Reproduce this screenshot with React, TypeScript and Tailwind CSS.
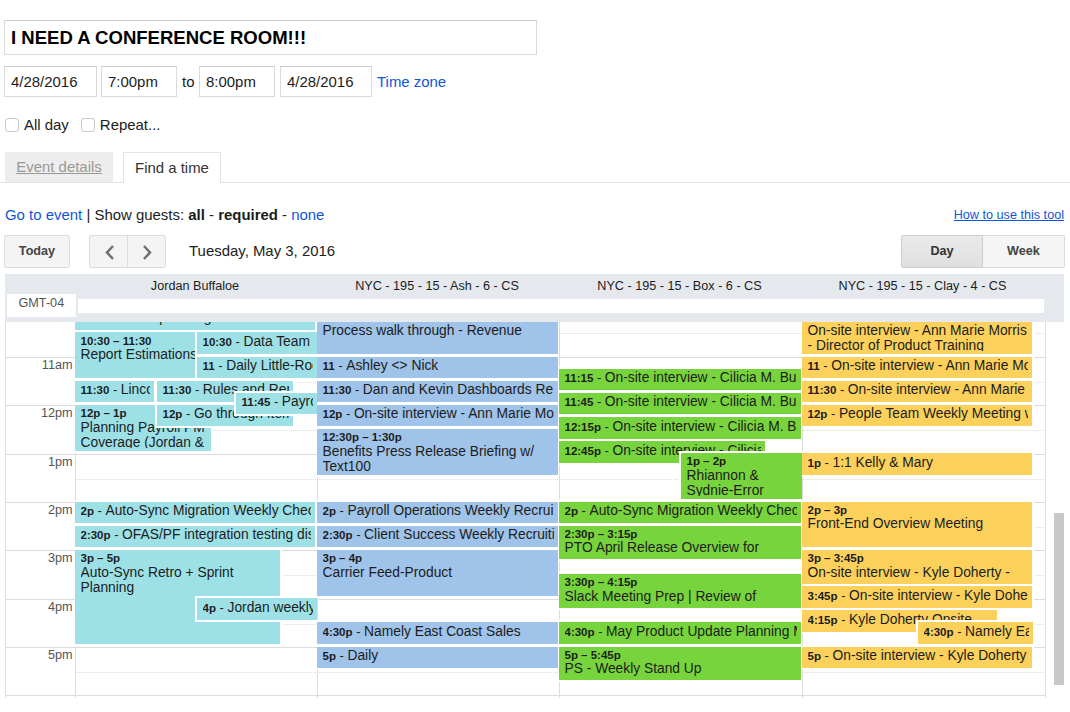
import React from "react";

const HOUR = 48.33;
const FIRST_TICK = 34.6;

type Tone = "cyan" | "blue" | "green" | "yellow";

interface CalEvent {
  start: number;
  hours: number;
  time: string;
  lines: string[];
  left?: number;
  width: number;
}

interface Column {
  name: string;
  tone: Tone;
  size: string;
  events: CalEvent[];
}

const tones: Record<Tone, string> = {
  cyan: "bg-[#9de1e7]",
  blue: "bg-[#9fc3e9]",
  green: "bg-[#78d43c]",
  yellow: "bg-[#fbd15c]",
};

const columns: Column[] = [
  {
    name: "Jordan Buffaloe",
    tone: "cyan",
    size: "w-[242px]",
    events: [
      { start: 10, hours: 0.5, time: "10", lines: ["Release planning"], width: 240 },
      { start: 10.5, hours: 1, time: "10:30 – 11:30", lines: ["Report Estimations"], width: 119.5 },
      { start: 10.5, hours: 0.5, time: "10:30", lines: ["Data Team"], left: 122, width: 120 },
      { start: 11, hours: 0.5, time: "11", lines: ["Daily Little-Ro", "ck"], left: 122, width: 120 },
      { start: 12, hours: 1, time: "12p – 1p", lines: ["Planning Payroll PM", "Coverage (Jordan &"], width: 135.5 },
      { start: 11.5, hours: 0.5, time: "11:30", lines: ["Linco"], width: 79 },
      { start: 11.5, hours: 0.5, time: "11:30", lines: ["Rules and Rem"], left: 82, width: 135.5 },
      { start: 12, hours: 0.5, time: "12p", lines: ["Go through Item"], left: 82, width: 135.5 },
      { start: 11.75, hours: 0.5, time: "11:45", lines: ["Payro"], left: 161, width: 81 },
      { start: 14, hours: 0.5, time: "2p", lines: ["Auto-Sync Migration Weekly Chec"], width: 240 },
      { start: 14.5, hours: 0.5, time: "2:30p", lines: ["OFAS/PF integration testing disc"], width: 240 },
      { start: 15, hours: 2, time: "3p – 5p", lines: ["Auto-Sync Retro + Sprint", "Planning"], width: 205 },
      { start: 16, hours: 0.5, time: "4p", lines: ["Jordan weekly"], left: 122, width: 120 },
    ],
  },
  {
    name: "NYC - 195 - 15 - Ash - 6 - CS",
    tone: "blue",
    size: "w-[242px]",
    events: [
      { start: 10, hours: 1, time: "10 – 11", lines: ["Process walk through - Revenue"], width: 240.5 },
      { start: 11, hours: 0.5, time: "11", lines: ["Ashley <> Nick"], width: 240.5 },
      { start: 11.5, hours: 0.5, time: "11:30", lines: ["Dan and Kevin Dashboards Re"], width: 240.5 },
      { start: 12, hours: 0.5, time: "12p", lines: ["On-site interview - Ann Marie Mo"], width: 240.5 },
      { start: 12.5, hours: 1, time: "12:30p – 1:30p", lines: ["Benefits Press Release Briefing w/", "Text100"], width: 240.5 },
      { start: 14, hours: 0.5, time: "2p", lines: ["Payroll Operations Weekly Recrui"], width: 240.5 },
      { start: 14.5, hours: 0.5, time: "2:30p", lines: ["Client Success Weekly Recruiti"], width: 240.5 },
      { start: 15, hours: 1, time: "3p – 4p", lines: ["Carrier Feed-Product"], width: 240.5 },
      { start: 16.5, hours: 0.5, time: "4:30p", lines: ["Namely East Coast Sales"], width: 240.5 },
      { start: 17, hours: 0.5, time: "5p", lines: ["Daily"], width: 240.5 },
    ],
  },
  {
    name: "NYC - 195 - 15 - Box - 6 - CS",
    tone: "green",
    size: "w-[243px]",
    events: [
      { start: 11.25, hours: 0.5, time: "11:15", lines: ["On-site interview - Cilicia M. Bu"], width: 241.5 },
      { start: 11.75, hours: 0.5, time: "11:45", lines: ["On-site interview - Cilicia M. Bu"], width: 241.5 },
      { start: 12.25, hours: 0.5, time: "12:15p", lines: ["On-site interview - Cilicia M. B"], width: 241.5 },
      { start: 12.75, hours: 0.5, time: "12:45p", lines: ["On-site interview - Cilicia"], width: 206 },
      { start: 13, hours: 1, time: "1p – 2p", lines: ["Rhiannon &", "Sydnie-Error"], left: 122, width: 121 },
      { start: 14, hours: 0.5, time: "2p", lines: ["Auto-Sync Migration Weekly Chec"], width: 241.5 },
      { start: 14.5, hours: 0.75, time: "2:30p – 3:15p", lines: ["PTO April Release Overview for"], width: 241.5 },
      { start: 15.5, hours: 0.75, time: "3:30p – 4:15p", lines: ["Slack Meeting Prep | Review of"], width: 241.5 },
      { start: 16.5, hours: 0.5, time: "4:30p", lines: ["May Product Update Planning M"], width: 241.5 },
      { start: 17, hours: 0.75, time: "5p – 5:45p", lines: ["PS - Weekly Stand Up"], width: 241.5 },
    ],
  },
  {
    name: "NYC - 195 - 15 - Clay - 4 - CS",
    tone: "yellow",
    size: "w-[243px]",
    events: [
      { start: 10, hours: 1, time: "10 – 11", lines: ["On-site interview - Ann Marie Morris", "- Director of Product Training"], width: 230 },
      { start: 11, hours: 0.5, time: "11", lines: ["On-site interview - Ann Marie Mo"], width: 230 },
      { start: 11.5, hours: 0.5, time: "11:30", lines: ["On-site interview - Ann Marie"], width: 230 },
      { start: 12, hours: 0.5, time: "12p", lines: ["People Team Weekly Meeting w"], width: 230 },
      { start: 13, hours: 0.5, time: "1p", lines: ["1:1 Kelly & Mary"], width: 230 },
      { start: 14, hours: 1, time: "2p – 3p", lines: ["Front-End Overview Meeting"], width: 230 },
      { start: 15, hours: 0.75, time: "3p – 3:45p", lines: ["On-site interview - Kyle Doherty -"], width: 230 },
      { start: 15.75, hours: 0.5, time: "3:45p", lines: ["On-site interview - Kyle Dohe"], width: 230 },
      { start: 16.25, hours: 0.5, time: "4:15p", lines: ["Kyle Doherty Onsite"], width: 195 },
      { start: 16.5, hours: 0.5, time: "4:30p", lines: ["Namely Ea"], left: 116, width: 115 },
      { start: 17, hours: 0.5, time: "5p", lines: ["On-site interview - Kyle Doherty"], width: 230 },
    ],
  },
];

const hours = ["11am", "12pm", "1pm", "2pm", "3pm", "4pm", "5pm"];

function EventBlock({ event, tone }: { event: CalEvent; tone: Tone }) {
  const compact = event.hours <= 0.5;
  return (
    <div
      className={`absolute pl-[5.5px] pb-[3px] ring-2 ring-white ${compact ? "pr-[4px]" : "pr-0"} ${tones[tone]}`}
      style={{
        top: FIRST_TICK + (event.start - 11) * HOUR,
        height: event.hours * HOUR - 2.6,
        left: event.left ?? 0,
        width: event.width,
      }}
    >
      {compact ? (
        <div className="h-full overflow-hidden whitespace-nowrap pt-[0.5px] text-[13.8px] leading-[17px]">
          <b className="text-[11.5px]">{event.time}</b>
          <span className="text-[13px]">{" - "}</span>
          {event.lines.join("")}
        </div>
      ) : (
        <div className="h-full overflow-hidden whitespace-nowrap pt-[2.2px]">
          <div className="text-[11.5px] font-bold leading-[12.5px]">{event.time}</div>
          {event.lines.map((line) => (
            <div key={line} className="text-[13.8px] leading-[15px]">
              {line}
            </div>
          ))}
        </div>
      )}
    </div>
  );
}

function Field({ value, className }: { value: string; className: string }) {
  return (
    <div className={`flex h-[31px] items-center border border-[#dadada] border-t-[#c8c8c8] pl-[6px] pt-[2px] ${className}`}>
      {value}
    </div>
  );
}

function Check({ label }: { label: string }) {
  return (
    <label className="flex items-center gap-[5px]">
      <span className="size-[14px] rounded-[3px] border border-[#c9c9c9] bg-white" />
      {label}
    </label>
  );
}

function Chevron({ d }: { d: string }) {
  return (
    <svg width="12" height="16" viewBox="0 0 12 16" fill="none" stroke="#707070" strokeWidth="2.5">
      <path d={d} />
    </svg>
  );
}

export default function App() {
  return (
    <div className="h-[712px] w-[1070px] overflow-hidden bg-white font-['Liberation_Sans',Arial,sans-serif] text-[14.95px] text-[#1c1c1c]">
      <div className="pl-[4px] pt-[20px]">
        <div className="flex h-[35px] w-[533px] items-center border border-[#dadada] border-t-[#c8c8c8] pl-[6px] text-[18.55px] font-bold text-black">
          I NEED A CONFERENCE ROOM!!!
        </div>
        <div className="mt-[11px] flex items-center">
          <Field value="4/28/2016" className="w-[93px]" />
          <Field value="7:00pm" className="ml-[4px] w-[76px]" />
          <span className="w-[22px] pl-[5px] pt-[2px]">to</span>
          <Field value="8:00pm" className="w-[76px]" />
          <Field value="4/28/2016" className="ml-[5px] w-[92px]" />
          <a className="ml-[5px] pt-[2px] text-[#1155dd]">Time zone</a>
        </div>
        <div className="mt-[17px] flex h-[22px] items-center gap-[12px] pl-px">
          <Check label="All day" />
          <Check label="Repeat..." />
        </div>
      </div>

      <div className="mt-[16px] flex h-[31px] items-stretch border-b border-[#e4e4e4] pl-[5px]">
        <div className="flex w-[108px] items-center justify-center bg-[#ededed] text-[#999] underline">Event details</div>
        <div className="-mb-px ml-[10px] flex w-[98px] items-center justify-center border border-b-0 border-[#e4e4e4] bg-white text-[#333]">
          Find a time
        </div>
      </div>

      <div className="mt-[21px] flex h-[22px] items-center justify-between pl-[5px] pr-[6px]">
        <div>
          <a className="text-[#1155dd]">Go to event</a> | Show guests: <b>all</b> - <b>required</b> -{" "}
          <a className="text-[#1155dd]">none</a>
        </div>
        <a className="text-[12.65px] text-[#1155dd] underline">How to use this tool</a>
      </div>

      <div className="mt-[9px] flex h-[33px] items-stretch pl-[4px] pr-[5px] text-[12.65px] font-bold text-[#444]">
        <div className="flex w-[66px] items-center justify-center rounded-[2px] border border-[#dcdcdc] bg-[#f4f4f4]">Today</div>
        <div className="ml-[19px] flex w-[77px] rounded-[2px] border border-[#dcdcdc] bg-[#f4f4f4]">
          <div className="flex w-[38px] items-center justify-center border-r border-[#dcdcdc] pl-[2px]">
            <Chevron d="M9 2L3 8.5L9 15" />
          </div>
          <div className="flex flex-1 items-center justify-center">
            <Chevron d="M3 2L9 8.5L3 15" />
          </div>
        </div>
        <div className="ml-[23px] flex items-center text-[14.95px] font-normal text-[#222]">Tuesday, May 3, 2016</div>
        <div className="ml-auto flex">
          <div className="flex w-[82px] items-center justify-center rounded-l-[2px] border border-[#cccccc] bg-linear-to-b from-[#eaeaea] to-[#e0e0e0] text-[#333]">
            Day
          </div>
          <div className="flex w-[82px] items-center justify-center rounded-r-[2px] border border-l-0 border-[#dcdcdc] bg-[#f5f5f5]">
            Week
          </div>
        </div>
      </div>

      <div className="ml-[5px] mt-[6px] flex h-[48px] w-[1059px] bg-[#e5e9ee] text-[12.65px]">
        <div className="w-[73px] shrink-0 pl-[2px] pt-[20px]">
          <div className="h-[23px] w-[69px] bg-white pl-[11.5px] pt-px leading-[16px] text-[#555]">GMT-04</div>
        </div>
        <div className="w-[966px]">
          <div className="-ml-[4px] flex h-[25px] w-[970px] items-center pb-px">
            {columns.map((c) => (
              <div key={c.name} className={`text-center ${c.size}`}>
                {c.name}
              </div>
            ))}
          </div>
          <div className="h-[14px] bg-white" />
        </div>
      </div>

      <div className="flex">
        <div className="ml-[5px] grid h-[376px] w-[1041px] shrink-0 overflow-hidden">
          <div className="col-start-1 row-start-1 h-[376px] overflow-hidden text-[12.65px] text-[#555]">
            <div className="flex h-[35px]">
              <div className="w-[70px]" />
              <div className="mt-[11px] flex-1 border-t border-dotted border-[#dcdcdc]" />
            </div>
            {hours.map((h) => (
              <div key={h} className="flex h-[48.33px] border-t border-[#dcdcdc]">
                <div className="w-[70px] pr-[2.5px] text-right leading-[15.5px]">{h}</div>
                <div className="mt-[24px] flex-1 border-t border-dotted border-[#dcdcdc]" />
              </div>
            ))}
            <div className="border-t border-[#dcdcdc]" />
          </div>
          <div className="col-start-1 row-start-1 flex h-[376px] border-x border-[#e0e0e0]">
            <div className="w-[69px] shrink-0" />
            {columns.map((c) => (
              <div key={c.name} className={`relative shrink-0 overflow-hidden ${c.size}`}>
                <div className="h-full border-l border-[#dcdcdc]" />
                {c.events.map((e, i) => (
                  <EventBlock key={i} event={e} tone={c.tone} />
                ))}
              </div>
            ))}
          </div>
        </div>
        <div className="ml-[8px] mt-[191px] h-[172px] w-[10px] bg-[#c8c8c8]" />
      </div>
    </div>
  );
}
